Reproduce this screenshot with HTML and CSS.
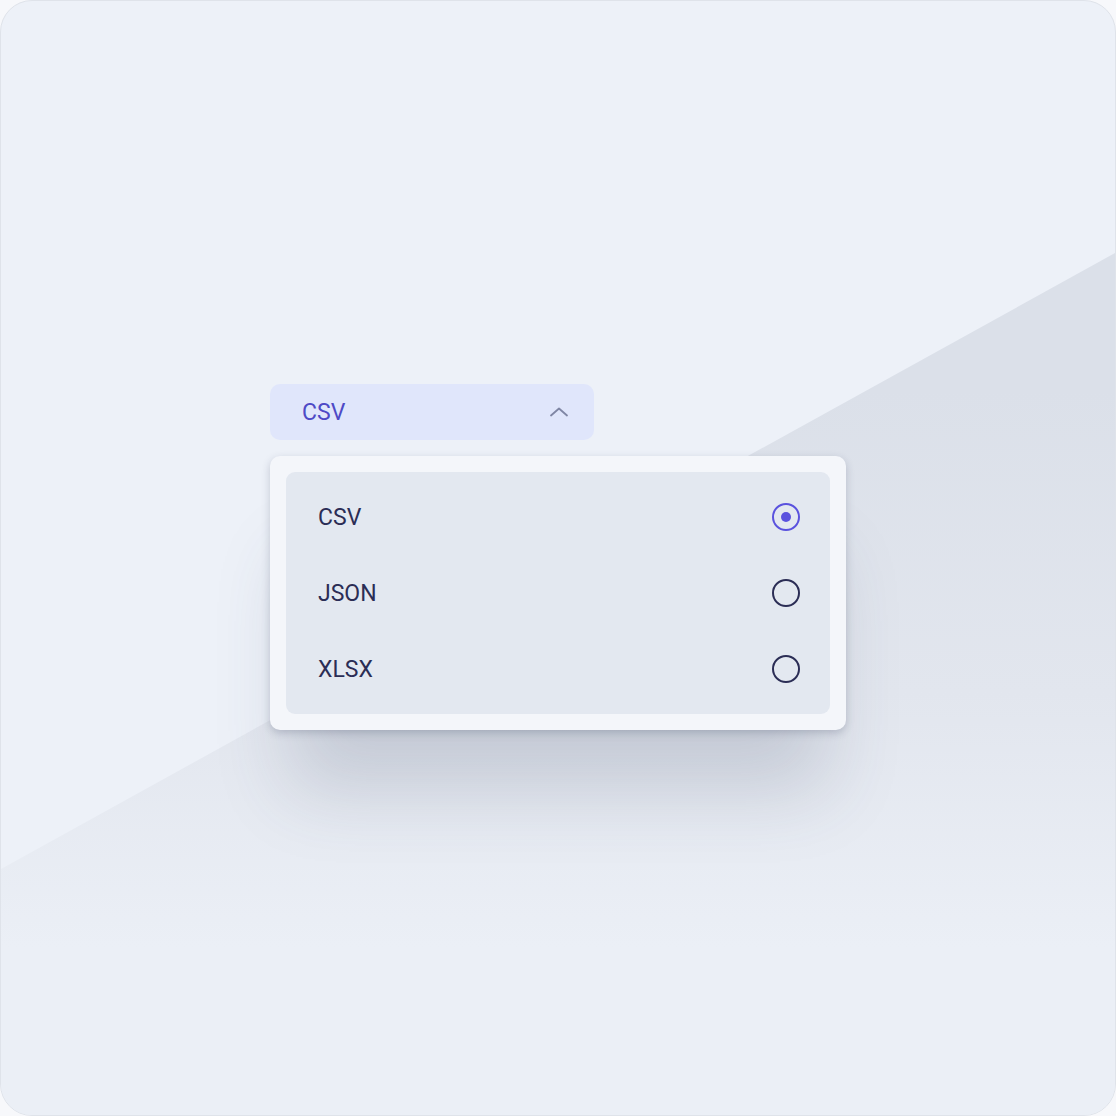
FILE: index.html
```html
<!DOCTYPE html>
<html lang="en">
<head>
  <meta charset="UTF-8">
  <title>Export format</title>
  <meta name="viewport" content="width=device-width, initial-scale=1.0">
  <link rel="stylesheet" href="styles.css">
</head>
<body>
  <div class="card">
    <div class="dropdown">
      <button class="trigger" type="button">
        <span class="trigger-label">CSV</span>
        <svg class="chevron" width="20" height="12" viewBox="0 0 20 12" fill="none">
          <path d="M2 9.5 L10 2.5 L18 9.5" stroke="#7f86a4" stroke-width="1.8" stroke-linecap="round" stroke-linejoin="round"/>
        </svg>
      </button>
      <div class="menu">
        <ul class="options">
          <li class="option">
            <span>CSV</span>
            <span class="radio checked"></span>
          </li>
          <li class="option">
            <span>JSON</span>
            <span class="radio"></span>
          </li>
          <li class="option">
            <span>XLSX</span>
            <span class="radio"></span>
          </li>
        </ul>
      </div>
    </div>
  </div>
</body>
</html>
```

FILE: styles.css
```css
body {
  margin: 0;
  padding: 0;
  background-color: #f7f8fb;
  font-family: Roboto, 'Liberation Sans', Arial, sans-serif;
}

.card {
  position: relative;
  box-sizing: border-box;
  width: 1116px;
  height: 1116px;
  border: 1px solid #dfe3ea;
  border-radius: 32px;
  background-color: #edf1f8;
  overflow: hidden;
  padding: 383px 0 0 269px;
}

/* diagonal shade behind the dropdown */
.card::before {
  content: "";
  position: absolute;
  inset: 0;
  background: linear-gradient(to bottom, #dbe0e9 35%, #e2e6ee 62%, #ebeff6 85%);
  clip-path: polygon(100% 252px, 100% 100%, 0 100%, 0 868px);
}

.dropdown {
  position: relative;
  width: 576px;
}

.trigger {
  display: flex;
  align-items: center;
  justify-content: space-between;
  width: 324px;
  height: 56px;
  padding: 0 25px 0 32px;
  border: none;
  border-radius: 10px;
  background-color: #e0e6fb;
  font-family: inherit;
  cursor: pointer;
}

.trigger-label {
  font-size: 23px;
  color: #4e4ac6;
}

.chevron {
  display: block;
}

.menu {
  margin-top: 16px;
  padding: 16px;
  border-radius: 10px;
  background-color: #f4f6fa;
  box-shadow: 0 3px 8px rgba(40, 48, 80, 0.22), 0 80px 70px -20px rgba(60, 70, 100, 0.18);
}

.options {
  list-style: none;
  margin: 0;
  padding: 7px 30px 7px 32px;
  border-radius: 9px;
  background-color: #e3e8f0;
}

.option {
  display: flex;
  align-items: center;
  justify-content: space-between;
  height: 76px;
  font-size: 23px;
  color: #2b2d55;
}

.radio {
  box-sizing: border-box;
  width: 28px;
  height: 28px;
  border: 2px solid #2b2d55;
  border-radius: 50%;
  display: flex;
  align-items: center;
  justify-content: center;
}

.radio.checked {
  border-color: #5a52de;
}

.radio.checked::after {
  content: "";
  width: 10px;
  height: 10px;
  border-radius: 50%;
  background-color: #5a52de;
}
```
